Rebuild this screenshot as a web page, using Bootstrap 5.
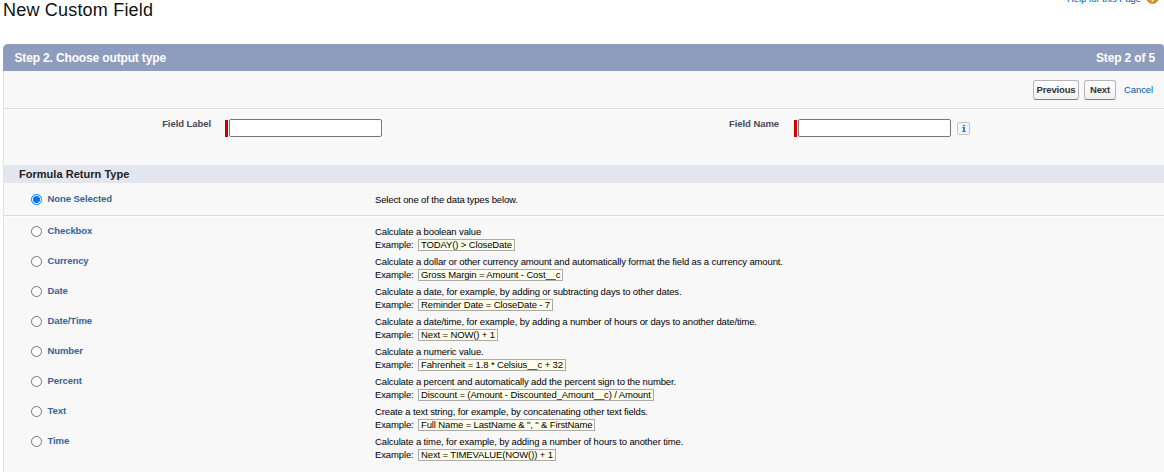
<!DOCTYPE html>
<html lang="en">
<head>
<meta charset="utf-8">
<meta name="viewport" content="width=device-width, initial-scale=1">
<title>New Custom Field</title>
<link rel="stylesheet" href="https://cdn.jsdelivr.net/npm/bootstrap@5.3.0/dist/css/bootstrap.min.css">
<style>
body{font-family:"Liberation Sans",Arial,sans-serif;font-size:9.5px;line-height:13px;color:#000;background:#fff;height:472px;overflow:hidden}
a{color:#015ba7;text-decoration:none}
.page-top{height:44px;padding-left:3px}
.page-title{font-size:18px;line-height:20px;letter-spacing:.2px;font-weight:400;color:#111}
.help-link{margin-top:-8px;margin-right:5px;letter-spacing:-.08px;gap:5px;height:13px}
.help-link svg{margin-top:-2px}
.wizard{margin-left:3px;height:428px;background:#f8f8f8;border-left:1px solid #e3e3e3;border-radius:5px 4px 0 0}
.wizard-head{height:27px;margin-left:-1px;padding:1px 9px 0 11.5px;background:#8e9dbe;color:#fff;font-weight:700;font-size:12px;letter-spacing:-.15px;border-radius:5px 4px 0 0}
.rule{border-bottom:1px solid #fff;box-shadow:inset 0 -1px #dbdbdb}
.actions{height:39px;padding-right:12px}
.cancel-link{letter-spacing:-.1px;width:28px;margin-top:-1px;white-space:nowrap}
.sf-btn{height:20px;padding:0;border:1px solid #b5b5b5;border-bottom-color:#7f7f7f;border-radius:3px;background:linear-gradient(#fff,#f0f0f0);font-size:9.5px;line-height:18px;font-weight:700;letter-spacing:-.15px;color:#333}
.sf-btn.prev{width:46px;margin-right:5px}
.sf-btn.next{width:32px;margin-right:8px}
.fields{height:55px;padding-top:9px}
.fields label{font-weight:700;color:#4a4a56;letter-spacing:-.07px;line-height:10px}
.lbl-a{width:207px;margin-right:14px}
.lbl-b{width:397px;margin-right:15px}
.required-bar{width:3px;height:17px;background:#c00;margin:1px 1px 0 0}
.sf-input{width:153px;height:18px;padding:0 2px;border:1px solid #767676;border-radius:2px;background:#fff}
.info{width:13px;height:13px;margin:3px 0 0 6px}
.section-head{height:18px;padding-left:15px;background:#e3e6ef;font-size:11px;font-weight:700;letter-spacing:.03px;color:#222}
.type-row{height:30px;padding-left:27px}
.type-row.first-row{height:34px}
.type-row input{appearance:none;width:11px;height:11px;margin:9px 5px 0 0;border:1px solid #767676;border-radius:50%;background:#fff}
.type-row input:checked{border-color:#0075ff;background:radial-gradient(circle,#0075ff 3.2px,#fff 3.9px)}
.type-row label{width:328px;font-weight:700;color:#36639a;letter-spacing:-.08px;padding:7px 0 0 .5px;line-height:13px}
.desc{padding-top:8px;letter-spacing:-.13px;white-space:nowrap}
.type-row.first-row .desc{padding-top:10px}
.type-row.first-row label{padding-top:9px}
.type-row.first-row input{margin-top:11px}
.example-label{width:43px}
.formula{border:1px solid #aaa;background:#ffffec;height:12px;line-height:9px;padding:0 2px;margin-top:1px}
</style>
</head>
<body>
<header class="page-top d-flex justify-content-between align-items-start">
  <h1 class="page-title m-0">New Custom Field</h1>
  <a href="#" class="help-link d-flex align-items-center">Help for this Page
    <svg width="13" height="13" viewBox="0 0 13 13"><circle cx="6.5" cy="6.5" r="5.8" fill="#e09a20" stroke="#b87310"/><path d="M4.5 5q0-2 2-2t2 1.8q0 1-2 2V8M6.5 9v1.6" fill="none" stroke="#fff" stroke-width="1.3"/></svg>
  </a>
</header>
<main class="wizard">
  <div class="wizard-head d-flex justify-content-between align-items-center"><span>Step 2. Choose output type</span><span>Step 2 of 5</span></div>
  <div class="actions rule d-flex justify-content-end align-items-center">
    <button class="btn sf-btn prev">Previous</button><button class="btn sf-btn next">Next</button><a href="#" class="cancel-link">Cancel</a>
  </div>
  <div class="fields d-flex align-items-start">
    <label class="lbl-a text-end" for="fl">Field Label</label><span class="required-bar"></span><input class="sf-input" id="fl">
    <label class="lbl-b text-end" for="fn">Field Name</label><span class="required-bar"></span><input class="sf-input" id="fn">
    <svg class="info" viewBox="0 0 13 13"><rect x=".5" y=".5" width="12" height="12" rx="1.5" fill="#f3f5f8" stroke="#c5c5c5"/><path d="M5 5.5h1.5M5 9.5h4" fill="none" stroke="#4a90d9"/><path d="M7 5v5M7 2.8v1.4" fill="none" stroke="#2a7bd0" stroke-width="1.8"/></svg>
  </div>
  <div class="section-head d-flex align-items-center">Formula Return Type</div>
  <div class="type-row first-row rule d-flex align-items-start"><input type="radio" name="t" id="t0" checked><label for="t0">None Selected</label><div class="desc">Select one of the data types below.</div></div>
  <div class="type-row d-flex align-items-start"><input type="radio" name="t" id="t1"><label for="t1">Checkbox</label><div class="desc"><div>Calculate a boolean value</div><div class="d-flex"><span class="example-label">Example:</span><span class="formula">TODAY() &gt; CloseDate</span></div></div></div>
  <div class="type-row d-flex align-items-start"><input type="radio" name="t" id="t2"><label for="t2">Currency</label><div class="desc"><div>Calculate a dollar or other currency amount and automatically format the field as a currency amount.</div><div class="d-flex"><span class="example-label">Example:</span><span class="formula">Gross Margin = Amount - Cost__c</span></div></div></div>
  <div class="type-row d-flex align-items-start"><input type="radio" name="t" id="t3"><label for="t3">Date</label><div class="desc"><div>Calculate a date, for example, by adding or subtracting days to other dates.</div><div class="d-flex"><span class="example-label">Example:</span><span class="formula">Reminder Date = CloseDate - 7</span></div></div></div>
  <div class="type-row d-flex align-items-start"><input type="radio" name="t" id="t4"><label for="t4">Date/Time</label><div class="desc"><div>Calculate a date/time, for example, by adding a number of hours or days to another date/time.</div><div class="d-flex"><span class="example-label">Example:</span><span class="formula">Next = NOW() + 1</span></div></div></div>
  <div class="type-row d-flex align-items-start"><input type="radio" name="t" id="t5"><label for="t5">Number</label><div class="desc"><div>Calculate a numeric value.</div><div class="d-flex"><span class="example-label">Example:</span><span class="formula">Fahrenheit = 1.8 * Celsius__c + 32</span></div></div></div>
  <div class="type-row d-flex align-items-start"><input type="radio" name="t" id="t6"><label for="t6">Percent</label><div class="desc"><div>Calculate a percent and automatically add the percent sign to the number.</div><div class="d-flex"><span class="example-label">Example:</span><span class="formula">Discount = (Amount - Discounted_Amount__c) / Amount</span></div></div></div>
  <div class="type-row d-flex align-items-start"><input type="radio" name="t" id="t7"><label for="t7">Text</label><div class="desc"><div>Create a text string, for example, by concatenating other text fields.</div><div class="d-flex"><span class="example-label">Example:</span><span class="formula">Full Name = LastName &amp; ", " &amp; FirstName</span></div></div></div>
  <div class="type-row d-flex align-items-start"><input type="radio" name="t" id="t8"><label for="t8">Time</label><div class="desc"><div>Calculate a time, for example, by adding a number of hours to another time.</div><div class="d-flex"><span class="example-label">Example:</span><span class="formula">Next = TIMEVALUE(NOW()) + 1</span></div></div></div>
</main>
<script src="https://cdn.jsdelivr.net/npm/bootstrap@5.3.0/dist/js/bootstrap.bundle.min.js"></script>
</body>
</html>
